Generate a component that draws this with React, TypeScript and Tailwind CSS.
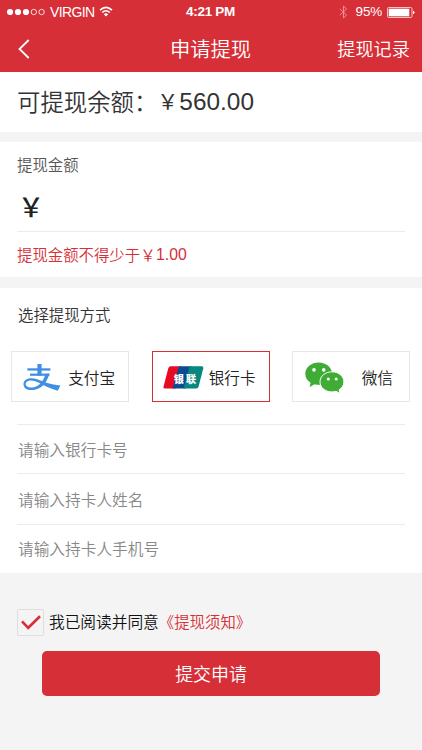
import type { ReactNode } from 'react';

const cjk = "font-['Noto_Sans_CJK_SC',sans-serif]";
const latin = "font-['Liberation_Sans','Noto_Sans_CJK_SC',sans-serif]";

function StatusBar() {
  return (
    <div className={`${latin} grid h-6 grid-cols-3 items-center pl-[7px] pr-[7px] text-[14px] leading-none`}>
      <div className="flex items-center">
        <svg width="39" height="8" viewBox="0 0 39 8" className="mr-[4px]">
          {[3, 11, 19].map((x) => (
            <circle key={x} cx={x} cy="4" r="3.1" fill="#fff" />
          ))}
          {[26.8, 34.6].map((x) => (
            <circle key={x} cx={x} cy="4" r="2.7" fill="none" stroke="#fff" strokeWidth="0.8" />
          ))}
        </svg>
        <span className="w-[44px] whitespace-nowrap text-[14px] font-normal tracking-[-0.6px]">VIRGIN</span>
        <svg width="14" height="11" viewBox="0 0 14 11" className="ml-[5px] -mt-px" fill="none" stroke="#fff">
          <path d="M1 4.2Q7-1.4 13 4.2" strokeWidth="1.6" />
          <path d="M3.2 6.5Q7 3 10.8 6.5" strokeWidth="1.6" />
          <path d="M4.8 8.2Q7 6.2 9.2 8.2L7 10.4Z" fill="#fff" stroke="none" />
        </svg>
      </div>
      <div className="pr-[1px] text-center text-[13.5px] font-bold tracking-[-0.3px]">4:21 PM</div>
      <div className="flex items-center justify-end">
        <svg width="9" height="14" viewBox="0 0 9 14" className="mr-[8px]" fill="none" stroke="#ef8f93" strokeWidth="1">
          <path d="M.8 3.8 7.6 10 4.5 13V1l3.1 3L.8 10.2" />
        </svg>
        <span className="mr-[5px] text-[13.5px] tracking-[-0.2px]">95%</span>
        <svg width="28" height="11" viewBox="0 0 28 11">
          <rect x=".5" y=".5" width="24.5" height="10" rx="1.2" fill="none" stroke="#f7c5c8" />
          <rect x="1.7" y="1.7" width="20.6" height="7.6" fill="#fff" />
          <path d="M26 3.8q1.6.4 1.6 1.7T26 7.2Z" fill="#fff" />
        </svg>
      </div>
    </div>
  );
}

function Alipay() {
  return (
    <svg width="38" height="28" viewBox="0 0 38 28" fill="#3f8fe3">
      <path d="M14.4 0h4.2v11.5h-4.2Z" />
      <path d="M4.4 4.3h23v2.3h-23Z" />
      <path d="M7 9.6h19.4v2.2H7Z" />
      <path d="M22.4 9.7h4c-1.5 5.7-4.1 10.2-8.2 13.2C12.3 27.4.5 27.8.5 20 .5 14.4 8.2 13 14.3 15.2 20.3 17.5 27.5 20.8 37.4 21.4L34.8 26.8C27.8 25 20.5 21.5 15.5 18.6 9 15 2.6 16 2.6 20.1c0 4.4 8.2 4.6 13.4.6 3.6-2.7 5.4-6.9 6.4-11Z" />
    </svg>
  );
}

function UnionPay() {
  return (
    <svg width="41" height="23" viewBox="0 0 41 23" className="-ml-[0.5px]">
      <path d="M7.8.3H18L12.4 22.5H1.8Q0 22.5.5 20.8L5.3 2.2Q5.8.3 7.8.3Z" fill="#e60b22" />
      <path d="M15.9.3H28.5L22.8 22.5H9.6Z" fill="#0b4b91" />
      <path d="M26.6.3h12.2q2 0 1.5 2L35.6 20.6q-.5 1.9-2.4 1.9H20.5Z" fill="#06877f" />
      <text x="10.8" y="16.6" fontFamily="'Noto Sans CJK SC', sans-serif" fontSize="10.2" fontWeight="900" fill="#fff">
        银
      </text>
      <text x="23" y="16.6" fontFamily="'Noto Sans CJK SC', sans-serif" fontSize="10.2" fontWeight="900" fill="#fff">
        联
      </text>
    </svg>
  );
}

function WeChat() {
  return (
    <svg width="40" height="32" viewBox="0 0 40 32" className="ml-px">
      <path d="M13.7.4C6.2.4.3 5.3.3 11.7c0 3.8 2 6.9 5.3 9L4.6 25l5.1-2.8c1.4.4 2.7.6 4 .6 7.5 0 13.4-4.9 13.4-11.1S21.2.4 13.7.4Z" fill="#3eac35" />
      <path
        d="M26.9 9.8c-6.7 0-11.9 4.4-11.9 10s5.2 10.1 11.9 10.1c1.5 0 2.9-.2 4.2-.6l4 2.3-1-3.8c3-1.8 4.8-4.7 4.8-8 0-5.6-5.3-10-12-10Z"
        fill="#3eac35"
        stroke="#fff"
        strokeWidth="1"
      />
      <circle cx="9" cy="7.9" r="1.8" fill="#fff" />
      <circle cx="18.7" cy="7.9" r="1.8" fill="#fff" />
      <circle cx="23.3" cy="17" r="1.5" fill="#fff" />
      <circle cx="31.2" cy="17" r="1.5" fill="#fff" />
    </svg>
  );
}

function Method({ icon, label, selected = false }: { icon: ReactNode; label: string; selected?: boolean }) {
  return (
    <button
      className={`flex h-[51px] w-[118px] items-center justify-between border pl-[11px] pt-[2px] text-[15.6px] text-[#222] ${
        selected ? 'border-[#d62f37]' : 'border-[#e7e7e7]'
      } ${label.length === 2 ? 'pr-[16px]' : 'pr-[13px]'}`}
    >
      {icon}
      <span>{label}</span>
    </button>
  );
}

export default function App() {
  return (
    <div className={`${cjk} h-[750px] w-[422px] overflow-hidden bg-[#f4f4f4] font-[350] text-[#333]`}>
      <header className="h-[72px] bg-[#d62f37] text-white">
        <StatusBar />
        <div className="grid h-12 grid-cols-[100px_1fr_100px] items-center">
          <svg width="12" height="20" viewBox="0 0 12 20" className="ml-[18px] mt-[2px]" fill="none" stroke="#fff" strokeWidth="1.8">
            <path d="M10.7 1 1.5 10l9.2 9" />
          </svg>
          <h1 className="pr-px text-center text-[20.3px] leading-none">申请提现</h1>
          <span className="pr-[12px] text-right text-[18.2px] leading-none">提现记录</span>
        </div>
      </header>

      <section className="flex h-[60px] items-center bg-white pl-[17px]">
        <span className="text-[23.4px] leading-none">可提现余额：</span>
        <span className="w-[22px] pb-[4px] text-[21px] font-normal leading-none">￥</span>
        <span className={`${latin} text-[24.4px] font-normal leading-none`}>560.00</span>
      </section>

      <section className="mt-[10px] h-[135px] bg-white px-[17px]">
        <h2 className="flex h-[45px] items-center pt-px text-[15.4px] text-[#555]">提现金额</h2>
        <div className="flex h-[45px] items-center border-b border-[#ebebeb] pb-[7px] pl-[1px] text-[26px] font-medium leading-none text-[#222]">￥</div>
        <p className="flex h-[45px] items-center text-[15.4px] text-[#d62f37]">
          <span>提现金额不得少于￥</span>
          <span className={`${latin} ml-[0.5px] text-[15.8px]`}>1.00</span>
        </p>
      </section>

      <section className="mt-[11px] h-[285px] bg-white">
        <h2 className="flex h-[52px] items-center pl-[18px] pt-px text-[15.4px]">选择提现方式</h2>
        <div className="mt-[11px] flex justify-between pl-[11px] pr-[12px]">
          <Method icon={<Alipay />} label="支付宝" />
          <Method icon={<UnionPay />} label="银行卡" selected />
          <Method icon={<WeChat />} label="微信" />
        </div>
        <div className="mx-[17px] mt-[22px] text-[15.7px] text-[#888]">
          <div className="flex h-[49px] items-center border-t border-[#ebebeb] pl-px pt-px">请输入银行卡号</div>
          <div className="flex h-[51px] items-center border-t border-[#ebebeb] pl-px pt-px">请输入持卡人姓名</div>
          <div className="flex h-[48px] items-center border-t border-[#ebebeb] pl-px">请输入持卡人手机号</div>
        </div>
      </section>

      <div className="mt-[35px] flex h-[28px] items-center pl-[17px] text-[15.7px] text-[#111]">
        <span className="mr-[5px] flex h-[27px] w-[27px] items-center justify-center rounded-[2px] border border-[#dedede]">
          <svg width="20" height="15" viewBox="0 0 20 15" fill="none" stroke="#d62f37" strokeWidth="2.6">
            <path d="m1 6.4 6.2 6.4L19 1.2" />
          </svg>
        </span>
        <span>我已阅读并同意</span>
        <span className="text-[15.4px] text-[#d62f37]">《提现须知》</span>
      </div>

      <button className="ml-[42px] mt-[15px] flex h-[45px] w-[338px] items-center justify-center rounded-[5px] bg-[#d62f37] text-[17.9px] text-white">
        提交申请
      </button>
    </div>
  );
}
